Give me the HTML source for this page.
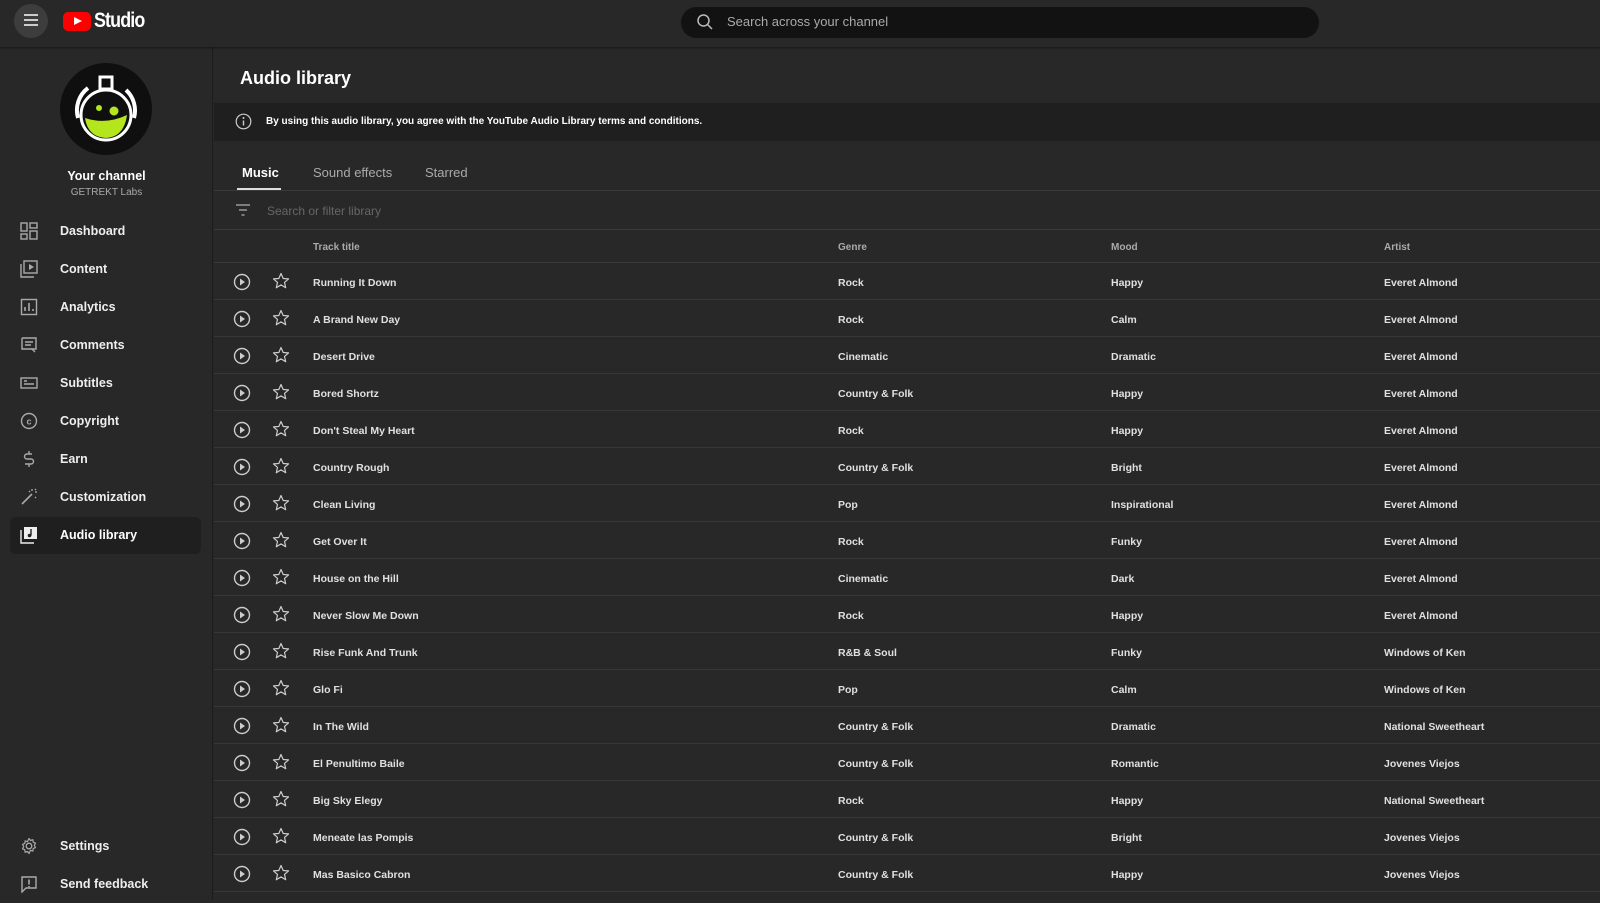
<!DOCTYPE html>
<html><head><meta charset="utf-8">
<style>
*{margin:0;padding:0;box-sizing:border-box}
body{width:1600px;height:900px;overflow:hidden;background:#282828;font-family:"Liberation Sans",Arial,sans-serif;color:#fff;position:relative}
.abs{position:absolute}
.hdr{left:0;top:0;width:1600px;height:47px;background:#282828;box-shadow:0 1px 2px rgba(0,0,0,.4);z-index:2}
.side{left:0;top:47px;width:213px;height:853px;background:#282828;border-right:1px solid #1c1c1c}
.nav{position:absolute;left:0;width:213px;height:38px}
.nav svg{position:absolute;left:20px;top:10px}
.nav span{position:absolute;left:60px;top:12px;font-size:12.5px;font-weight:bold;color:#eee}
.row{position:absolute;left:214px;width:1386px;height:37px;border-bottom:1px solid #383838;font-size:10.5px;font-weight:bold;color:#e0e0e0}
.row span{position:absolute;top:14px}
.row svg{position:absolute}
.c1{left:99px}.c2{left:624px}.c3{left:897px}.c4{left:1170px}
</style></head><body>
<div class="abs hdr">
  <div class="abs" style="left:14px;top:4px;width:34px;height:34px;border-radius:50%;background:#3d3d3d"></div>
  <div class="abs" style="left:24px;top:14px;width:14px;height:2px;background:#ccc;box-shadow:0 5px 0 #ccc,0 10px 0 #ccc"></div>
  <div class="abs" style="left:63px;top:12px;width:28px;height:19px;border-radius:5px;background:#f00"></div>
  <div class="abs" style="left:74px;top:17px;width:0;height:0;border-left:8px solid #fff;border-top:4.5px solid transparent;border-bottom:4.5px solid transparent"></div>
  <div class="abs" style="left:94px;top:9px;font-size:21px;font-weight:bold;letter-spacing:-1px;transform:scaleX(.85);transform-origin:left">Studio</div>
  <div class="abs" style="left:681px;top:7px;width:638px;height:31px;border-radius:16px;background:#121212"></div>
  <svg class="abs" style="left:696px;top:13px" width="18" height="18" viewBox="0 0 18 18"><circle cx="7.5" cy="7.5" r="5.5" fill="none" stroke="#bbb" stroke-width="1.5"/><path d="M11.5 11.5L16 16" stroke="#bbb" stroke-width="1.5"/></svg>
  <div class="abs" style="left:727px;top:14px;font-size:13px;color:#aaa">Search across your channel</div>
</div>

<div class="abs side">
  <svg class="abs" style="left:60px;top:16px" width="92" height="92" viewBox="0 0 92 92">
    <circle cx="46" cy="46" r="46" fill="#0f0f0f"/>
    <path d="M18 55a28 28 0 0 1 10-30" stroke="#fff" stroke-width="4" fill="none"/>
    <path d="M74 55a28 28 0 0 0-8-28" stroke="#fff" stroke-width="4" fill="none"/>
    <circle cx="46" cy="52" r="25" fill="none" stroke="#fff" stroke-width="3"/>
    <rect x="40" y="14" width="12" height="12" fill="#0f0f0f" stroke="#fff" stroke-width="3"/>
    <path d="M25 55 Q46 62 67 52 Q64 74 46 75 Q28 74 25 55Z" fill="#b4e61e"/>
    <circle cx="39" cy="45" r="3" fill="#b4e61e"/><circle cx="54" cy="48" r="4.5" fill="#b4e61e"/>
  </svg>
  <div class="abs" style="left:0;width:213px;text-align:center;top:122px;font-size:12.5px;font-weight:bold">Your channel</div>
  <div class="abs" style="left:0;width:213px;text-align:center;top:140px;font-size:10px;color:#aaa">GETREKT Labs</div>
  <div class="abs" style="left:10px;top:470px;width:191px;height:37px;border-radius:6px;background:#1f1f1f"></div>
</div>

<div class="nav" style="top:212px"><svg width="18" height="18"><g fill="none" stroke="#aaa" stroke-width="1.4"><rect x="1" y="1" width="6" height="8"/><rect x="10" y="1" width="7" height="5"/><rect x="1" y="12" width="6" height="5"/><rect x="10" y="9" width="7" height="8"/></g></svg><span>Dashboard</span></div>
<div class="nav" style="top:250px"><svg width="18" height="18"><g fill="none" stroke="#aaa" stroke-width="1.4"><rect x="4" y="1" width="13" height="12"/><path d="M1 4v13h13"/></g><path d="M9 4l5 3-5 3z" fill="#aaa"/></svg><span>Content</span></div>
<div class="nav" style="top:288px"><svg width="18" height="18"><rect x="1.5" y="1.5" width="15" height="15" fill="none" stroke="#aaa" stroke-width="1.4"/><path d="M5 13V9M9 13V5M13 13v-2" stroke="#aaa" stroke-width="1.6"/></svg><span>Analytics</span></div>
<div class="nav" style="top:326px"><svg width="18" height="18"><path d="M2 2h14v11H12l3 3" fill="none" stroke="#aaa" stroke-width="1.4"/><path d="M2 2v11h10" fill="none" stroke="#aaa" stroke-width="1.4"/><path d="M5 6h8M5 9h6" stroke="#aaa" stroke-width="1.4"/></svg><span>Comments</span></div>
<div class="nav" style="top:364px"><svg width="18" height="18"><rect x="1" y="4" width="16" height="10" fill="none" stroke="#aaa" stroke-width="1.4"/><path d="M4 10h10M4 7h3" stroke="#aaa" stroke-width="1.4"/></svg><span>Subtitles</span></div>
<div class="nav" style="top:402px"><svg width="18" height="18"><circle cx="9" cy="9" r="7.5" fill="none" stroke="#aaa" stroke-width="1.4"/><text x="9" y="12.5" font-size="9" font-weight="bold" text-anchor="middle" fill="#aaa" font-family="Liberation Sans">c</text></svg><span>Copyright</span></div>
<div class="nav" style="top:440px"><svg width="18" height="18"><path d="M12 4H7a2.5 2.5 0 0 0 0 5h4a2.5 2.5 0 0 1 0 5H5M9 1v3M9 14v3" fill="none" stroke="#aaa" stroke-width="1.4"/></svg><span>Earn</span></div>
<div class="nav" style="top:478px"><svg width="18" height="18"><path d="M2 16L12 6" stroke="#aaa" stroke-width="1.6"/><path d="M12 1v2M15 4h2M9 3l1 1M15 9l1 1M16 1l-1 1" stroke="#aaa" stroke-width="1.3"/></svg><span>Customization</span></div>
<div class="nav" style="top:516px"><svg width="18" height="18"><rect x="4" y="1" width="13" height="12" fill="#eee"/><path d="M1 4v13h13" fill="none" stroke="#eee" stroke-width="1.4"/><path d="M11 3v6.5" stroke="#222" stroke-width="1.4"/><circle cx="9.5" cy="9.5" r="1.8" fill="#222"/></svg><span style="color:#fff">Audio library</span></div>
<div class="nav" style="top:827px"><svg width="18" height="18"><circle cx="9" cy="9" r="2.8" fill="none" stroke="#aaa" stroke-width="1.3"/><path d="M9 1.5l1.5 2 2.4-.8.3 2.5 2.3 1-1.2 2.2 1.2 2.2-2.3 1-.3 2.5-2.4-.8L9 16.5l-1.5-2-2.4.8-.3-2.5-2.3-1L3.7 9.6 2.5 7.4l2.3-1 .3-2.5 2.4.8z" fill="none" stroke="#aaa" stroke-width="1.2" stroke-linejoin="round"/></svg><span>Settings</span></div>
<div class="nav" style="top:865px"><svg width="18" height="18"><path d="M2 2h14v11H6l-4 4z" fill="none" stroke="#aaa" stroke-width="1.4"/><path d="M9 4.5v5M9 11v1.2" stroke="#aaa" stroke-width="1.6"/></svg><span>Send feedback</span></div>

<div class="abs" style="left:240px;top:68px;font-size:18px;font-weight:bold">Audio library</div>
<div class="abs" style="left:214px;top:103px;width:1386px;height:38px;background:#1f1f1f"></div>
<svg class="abs" style="left:235px;top:113px" width="17" height="17"><circle cx="8.5" cy="8.5" r="7.3" fill="none" stroke="#ccc" stroke-width="1.2"/><path d="M8.5 7.5v5" stroke="#ccc" stroke-width="1.4"/><circle cx="8.5" cy="5" r="1" fill="#ccc"/></svg>
<div class="abs" style="left:266px;top:116px;font-size:10px;font-weight:bold">By using this audio library, you agree with the YouTube Audio Library terms and conditions.</div>
<div class="abs" style="left:242px;top:165px;font-size:13px;font-weight:bold">Music</div>
<div class="abs" style="left:313px;top:165px;font-size:13px;color:#aaa">Sound effects</div>
<div class="abs" style="left:425px;top:165px;font-size:13px;color:#aaa">Starred</div>
<div class="abs" style="left:237px;top:188px;width:44px;height:2px;background:#ddd"></div>
<div class="abs" style="left:214px;top:190px;width:1386px;height:1px;background:#3a3a3a"></div>
<svg class="abs" style="left:235px;top:203px" width="16" height="14"><path d="M1 2h14M4 7h8M6.5 12h3" stroke="#999" stroke-width="1.4"/></svg>
<div class="abs" style="left:267px;top:204px;font-size:12px;color:#666">Search or filter library</div>
<div class="abs" style="left:214px;top:229px;width:1386px;height:1px;background:#3a3a3a"></div>
<div class="abs" style="left:214px;top:262px;width:1386px;height:1px;background:#3a3a3a"></div>
<div class="abs" style="left:313px;top:242px;font-size:10px;font-weight:bold;color:#aaa">Track title</div>
<div class="abs" style="left:838px;top:242px;font-size:10px;font-weight:bold;color:#aaa">Genre</div>
<div class="abs" style="left:1111px;top:242px;font-size:10px;font-weight:bold;color:#aaa">Mood</div>
<div class="abs" style="left:1384px;top:242px;font-size:10px;font-weight:bold;color:#aaa">Artist</div>

<div class="row" style="top:263px"><svg style="left:19px;top:10px" width="18" height="18"><circle cx="9" cy="9" r="7.5" fill="none" stroke="#ccc" stroke-width="1.4"/><path d="M7 5.5l5 3.5-5 3.5z" fill="#ccc"/></svg><svg style="left:58px;top:9px" width="18" height="18"><path d="M9 1.5l2.2 5 5.3.4-4 3.5 1.2 5.3L9 12.9l-4.7 2.8 1.2-5.3-4-3.5 5.3-.4z" fill="none" stroke="#ccc" stroke-width="1.2" stroke-linejoin="round"/></svg><span class="c1">Running It Down</span><span class="c2">Rock</span><span class="c3">Happy</span><span class="c4">Everet Almond</span></div>
<div class="row" style="top:300px"><svg style="left:19px;top:10px" width="18" height="18"><circle cx="9" cy="9" r="7.5" fill="none" stroke="#ccc" stroke-width="1.4"/><path d="M7 5.5l5 3.5-5 3.5z" fill="#ccc"/></svg><svg style="left:58px;top:9px" width="18" height="18"><path d="M9 1.5l2.2 5 5.3.4-4 3.5 1.2 5.3L9 12.9l-4.7 2.8 1.2-5.3-4-3.5 5.3-.4z" fill="none" stroke="#ccc" stroke-width="1.2" stroke-linejoin="round"/></svg><span class="c1">A Brand New Day</span><span class="c2">Rock</span><span class="c3">Calm</span><span class="c4">Everet Almond</span></div>
<div class="row" style="top:337px"><svg style="left:19px;top:10px" width="18" height="18"><circle cx="9" cy="9" r="7.5" fill="none" stroke="#ccc" stroke-width="1.4"/><path d="M7 5.5l5 3.5-5 3.5z" fill="#ccc"/></svg><svg style="left:58px;top:9px" width="18" height="18"><path d="M9 1.5l2.2 5 5.3.4-4 3.5 1.2 5.3L9 12.9l-4.7 2.8 1.2-5.3-4-3.5 5.3-.4z" fill="none" stroke="#ccc" stroke-width="1.2" stroke-linejoin="round"/></svg><span class="c1">Desert Drive</span><span class="c2">Cinematic</span><span class="c3">Dramatic</span><span class="c4">Everet Almond</span></div>
<div class="row" style="top:374px"><svg style="left:19px;top:10px" width="18" height="18"><circle cx="9" cy="9" r="7.5" fill="none" stroke="#ccc" stroke-width="1.4"/><path d="M7 5.5l5 3.5-5 3.5z" fill="#ccc"/></svg><svg style="left:58px;top:9px" width="18" height="18"><path d="M9 1.5l2.2 5 5.3.4-4 3.5 1.2 5.3L9 12.9l-4.7 2.8 1.2-5.3-4-3.5 5.3-.4z" fill="none" stroke="#ccc" stroke-width="1.2" stroke-linejoin="round"/></svg><span class="c1">Bored Shortz</span><span class="c2">Country &amp; Folk</span><span class="c3">Happy</span><span class="c4">Everet Almond</span></div>
<div class="row" style="top:411px"><svg style="left:19px;top:10px" width="18" height="18"><circle cx="9" cy="9" r="7.5" fill="none" stroke="#ccc" stroke-width="1.4"/><path d="M7 5.5l5 3.5-5 3.5z" fill="#ccc"/></svg><svg style="left:58px;top:9px" width="18" height="18"><path d="M9 1.5l2.2 5 5.3.4-4 3.5 1.2 5.3L9 12.9l-4.7 2.8 1.2-5.3-4-3.5 5.3-.4z" fill="none" stroke="#ccc" stroke-width="1.2" stroke-linejoin="round"/></svg><span class="c1">Don't Steal My Heart</span><span class="c2">Rock</span><span class="c3">Happy</span><span class="c4">Everet Almond</span></div>
<div class="row" style="top:448px"><svg style="left:19px;top:10px" width="18" height="18"><circle cx="9" cy="9" r="7.5" fill="none" stroke="#ccc" stroke-width="1.4"/><path d="M7 5.5l5 3.5-5 3.5z" fill="#ccc"/></svg><svg style="left:58px;top:9px" width="18" height="18"><path d="M9 1.5l2.2 5 5.3.4-4 3.5 1.2 5.3L9 12.9l-4.7 2.8 1.2-5.3-4-3.5 5.3-.4z" fill="none" stroke="#ccc" stroke-width="1.2" stroke-linejoin="round"/></svg><span class="c1">Country Rough</span><span class="c2">Country &amp; Folk</span><span class="c3">Bright</span><span class="c4">Everet Almond</span></div>
<div class="row" style="top:485px"><svg style="left:19px;top:10px" width="18" height="18"><circle cx="9" cy="9" r="7.5" fill="none" stroke="#ccc" stroke-width="1.4"/><path d="M7 5.5l5 3.5-5 3.5z" fill="#ccc"/></svg><svg style="left:58px;top:9px" width="18" height="18"><path d="M9 1.5l2.2 5 5.3.4-4 3.5 1.2 5.3L9 12.9l-4.7 2.8 1.2-5.3-4-3.5 5.3-.4z" fill="none" stroke="#ccc" stroke-width="1.2" stroke-linejoin="round"/></svg><span class="c1">Clean Living</span><span class="c2">Pop</span><span class="c3">Inspirational</span><span class="c4">Everet Almond</span></div>
<div class="row" style="top:522px"><svg style="left:19px;top:10px" width="18" height="18"><circle cx="9" cy="9" r="7.5" fill="none" stroke="#ccc" stroke-width="1.4"/><path d="M7 5.5l5 3.5-5 3.5z" fill="#ccc"/></svg><svg style="left:58px;top:9px" width="18" height="18"><path d="M9 1.5l2.2 5 5.3.4-4 3.5 1.2 5.3L9 12.9l-4.7 2.8 1.2-5.3-4-3.5 5.3-.4z" fill="none" stroke="#ccc" stroke-width="1.2" stroke-linejoin="round"/></svg><span class="c1">Get Over It</span><span class="c2">Rock</span><span class="c3">Funky</span><span class="c4">Everet Almond</span></div>
<div class="row" style="top:559px"><svg style="left:19px;top:10px" width="18" height="18"><circle cx="9" cy="9" r="7.5" fill="none" stroke="#ccc" stroke-width="1.4"/><path d="M7 5.5l5 3.5-5 3.5z" fill="#ccc"/></svg><svg style="left:58px;top:9px" width="18" height="18"><path d="M9 1.5l2.2 5 5.3.4-4 3.5 1.2 5.3L9 12.9l-4.7 2.8 1.2-5.3-4-3.5 5.3-.4z" fill="none" stroke="#ccc" stroke-width="1.2" stroke-linejoin="round"/></svg><span class="c1">House on the Hill</span><span class="c2">Cinematic</span><span class="c3">Dark</span><span class="c4">Everet Almond</span></div>
<div class="row" style="top:596px"><svg style="left:19px;top:10px" width="18" height="18"><circle cx="9" cy="9" r="7.5" fill="none" stroke="#ccc" stroke-width="1.4"/><path d="M7 5.5l5 3.5-5 3.5z" fill="#ccc"/></svg><svg style="left:58px;top:9px" width="18" height="18"><path d="M9 1.5l2.2 5 5.3.4-4 3.5 1.2 5.3L9 12.9l-4.7 2.8 1.2-5.3-4-3.5 5.3-.4z" fill="none" stroke="#ccc" stroke-width="1.2" stroke-linejoin="round"/></svg><span class="c1">Never Slow Me Down</span><span class="c2">Rock</span><span class="c3">Happy</span><span class="c4">Everet Almond</span></div>
<div class="row" style="top:633px"><svg style="left:19px;top:10px" width="18" height="18"><circle cx="9" cy="9" r="7.5" fill="none" stroke="#ccc" stroke-width="1.4"/><path d="M7 5.5l5 3.5-5 3.5z" fill="#ccc"/></svg><svg style="left:58px;top:9px" width="18" height="18"><path d="M9 1.5l2.2 5 5.3.4-4 3.5 1.2 5.3L9 12.9l-4.7 2.8 1.2-5.3-4-3.5 5.3-.4z" fill="none" stroke="#ccc" stroke-width="1.2" stroke-linejoin="round"/></svg><span class="c1">Rise Funk And Trunk</span><span class="c2">R&amp;B &amp; Soul</span><span class="c3">Funky</span><span class="c4">Windows of Ken</span></div>
<div class="row" style="top:670px"><svg style="left:19px;top:10px" width="18" height="18"><circle cx="9" cy="9" r="7.5" fill="none" stroke="#ccc" stroke-width="1.4"/><path d="M7 5.5l5 3.5-5 3.5z" fill="#ccc"/></svg><svg style="left:58px;top:9px" width="18" height="18"><path d="M9 1.5l2.2 5 5.3.4-4 3.5 1.2 5.3L9 12.9l-4.7 2.8 1.2-5.3-4-3.5 5.3-.4z" fill="none" stroke="#ccc" stroke-width="1.2" stroke-linejoin="round"/></svg><span class="c1">Glo Fi</span><span class="c2">Pop</span><span class="c3">Calm</span><span class="c4">Windows of Ken</span></div>
<div class="row" style="top:707px"><svg style="left:19px;top:10px" width="18" height="18"><circle cx="9" cy="9" r="7.5" fill="none" stroke="#ccc" stroke-width="1.4"/><path d="M7 5.5l5 3.5-5 3.5z" fill="#ccc"/></svg><svg style="left:58px;top:9px" width="18" height="18"><path d="M9 1.5l2.2 5 5.3.4-4 3.5 1.2 5.3L9 12.9l-4.7 2.8 1.2-5.3-4-3.5 5.3-.4z" fill="none" stroke="#ccc" stroke-width="1.2" stroke-linejoin="round"/></svg><span class="c1">In The Wild</span><span class="c2">Country &amp; Folk</span><span class="c3">Dramatic</span><span class="c4">National Sweetheart</span></div>
<div class="row" style="top:744px"><svg style="left:19px;top:10px" width="18" height="18"><circle cx="9" cy="9" r="7.5" fill="none" stroke="#ccc" stroke-width="1.4"/><path d="M7 5.5l5 3.5-5 3.5z" fill="#ccc"/></svg><svg style="left:58px;top:9px" width="18" height="18"><path d="M9 1.5l2.2 5 5.3.4-4 3.5 1.2 5.3L9 12.9l-4.7 2.8 1.2-5.3-4-3.5 5.3-.4z" fill="none" stroke="#ccc" stroke-width="1.2" stroke-linejoin="round"/></svg><span class="c1">El Penultimo Baile</span><span class="c2">Country &amp; Folk</span><span class="c3">Romantic</span><span class="c4">Jovenes Viejos</span></div>
<div class="row" style="top:781px"><svg style="left:19px;top:10px" width="18" height="18"><circle cx="9" cy="9" r="7.5" fill="none" stroke="#ccc" stroke-width="1.4"/><path d="M7 5.5l5 3.5-5 3.5z" fill="#ccc"/></svg><svg style="left:58px;top:9px" width="18" height="18"><path d="M9 1.5l2.2 5 5.3.4-4 3.5 1.2 5.3L9 12.9l-4.7 2.8 1.2-5.3-4-3.5 5.3-.4z" fill="none" stroke="#ccc" stroke-width="1.2" stroke-linejoin="round"/></svg><span class="c1">Big Sky Elegy</span><span class="c2">Rock</span><span class="c3">Happy</span><span class="c4">National Sweetheart</span></div>
<div class="row" style="top:818px"><svg style="left:19px;top:10px" width="18" height="18"><circle cx="9" cy="9" r="7.5" fill="none" stroke="#ccc" stroke-width="1.4"/><path d="M7 5.5l5 3.5-5 3.5z" fill="#ccc"/></svg><svg style="left:58px;top:9px" width="18" height="18"><path d="M9 1.5l2.2 5 5.3.4-4 3.5 1.2 5.3L9 12.9l-4.7 2.8 1.2-5.3-4-3.5 5.3-.4z" fill="none" stroke="#ccc" stroke-width="1.2" stroke-linejoin="round"/></svg><span class="c1">Meneate las Pompis</span><span class="c2">Country &amp; Folk</span><span class="c3">Bright</span><span class="c4">Jovenes Viejos</span></div>
<div class="row" style="top:855px"><svg style="left:19px;top:10px" width="18" height="18"><circle cx="9" cy="9" r="7.5" fill="none" stroke="#ccc" stroke-width="1.4"/><path d="M7 5.5l5 3.5-5 3.5z" fill="#ccc"/></svg><svg style="left:58px;top:9px" width="18" height="18"><path d="M9 1.5l2.2 5 5.3.4-4 3.5 1.2 5.3L9 12.9l-4.7 2.8 1.2-5.3-4-3.5 5.3-.4z" fill="none" stroke="#ccc" stroke-width="1.2" stroke-linejoin="round"/></svg><span class="c1">Mas Basico Cabron</span><span class="c2">Country &amp; Folk</span><span class="c3">Happy</span><span class="c4">Jovenes Viejos</span></div>
</body></html>
